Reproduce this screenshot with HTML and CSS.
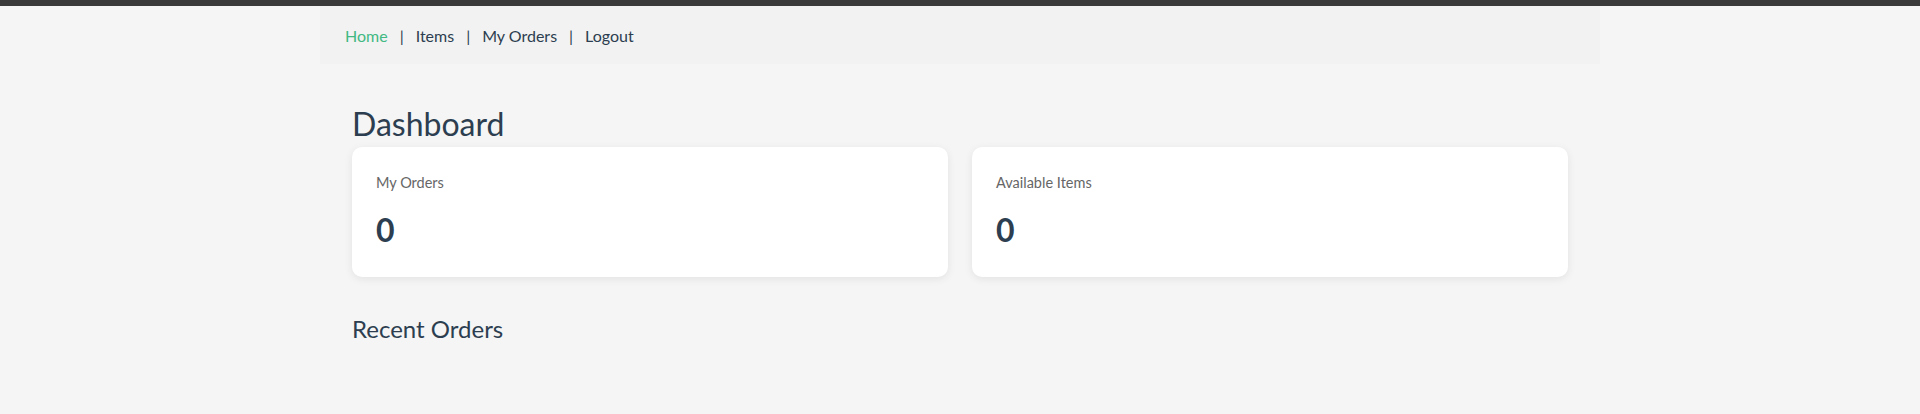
FILE: index.html
```html
<!DOCTYPE html>
<html lang="en">
<head>
<meta charset="utf-8">
<title>Dashboard</title>
<link rel="stylesheet" href="styles.css">
</head>
<body>
<div class="topbar"></div>
<nav class="nav">
  <a class="nav-link active" href="#">Home</a>
  <span class="sep">|</span>
  <a class="nav-link" href="#">Items</a>
  <span class="sep">|</span>
  <a class="nav-link" href="#">My Orders</a>
  <span class="sep">|</span>
  <a class="nav-link" href="#">Logout</a>
</nav>
<main class="main">
  <h1 class="title">Dashboard</h1>
  <div class="cards">
    <div class="card">
      <div class="card-label">My Orders</div>
      <div class="card-value">0</div>
    </div>
    <div class="card">
      <div class="card-label">Available Items</div>
      <div class="card-value">0</div>
    </div>
  </div>
  <h2 class="subtitle">Recent Orders</h2>
</main>
</body>
</html>
```

FILE: styles.css
```css
* { box-sizing: border-box; }
html, body { margin: 0; padding: 0; }
body {
  background: #f5f5f5;
  font-family: Lato, "Open Sans", sans-serif;
  color: #2c3e50;
  min-height: 414px;
}
.topbar {
  height: 6px;
  background: #3a3a3a;
}
.nav {
  max-width: 1280px;
  margin: 0 auto;
  height: 58px;
  padding: 2px 25px 0;
  background: #f2f2f2;
  display: flex;
  align-items: center;
  font-size: 16px;
  line-height: 20px;
}
.nav-link {
  color: #2c3e50;
  text-decoration: none;
}
.nav-link.active { color: #42b983; }
.sep {
  margin: 0 12px;
  color: #2c3e50;
}
.main {
  max-width: 1280px;
  margin: 0 auto;
  padding: 0 32px;
}
.title {
  margin: 40px 0 3px;
  font-size: 32px;
  line-height: 40px;
  font-weight: 400;
}
.cards {
  display: grid;
  grid-template-columns: 1fr 1fr;
  gap: 24px;
}
.card {
  background: #fff;
  border-radius: 10px;
  box-shadow: 0 2px 8px rgba(0, 0, 0, 0.08);
  padding: 26px 24px 26px;
}
.card-label {
  font-size: 14.5px;
  line-height: 20px;
  color: #666;
}
.card-value {
  margin-top: 16px;
  font-size: 32px;
  line-height: 42px;
  font-weight: 700;
}
.subtitle {
  margin: 37px 0 0;
  font-size: 24px;
  line-height: 30px;
  font-weight: 400;
}
```
